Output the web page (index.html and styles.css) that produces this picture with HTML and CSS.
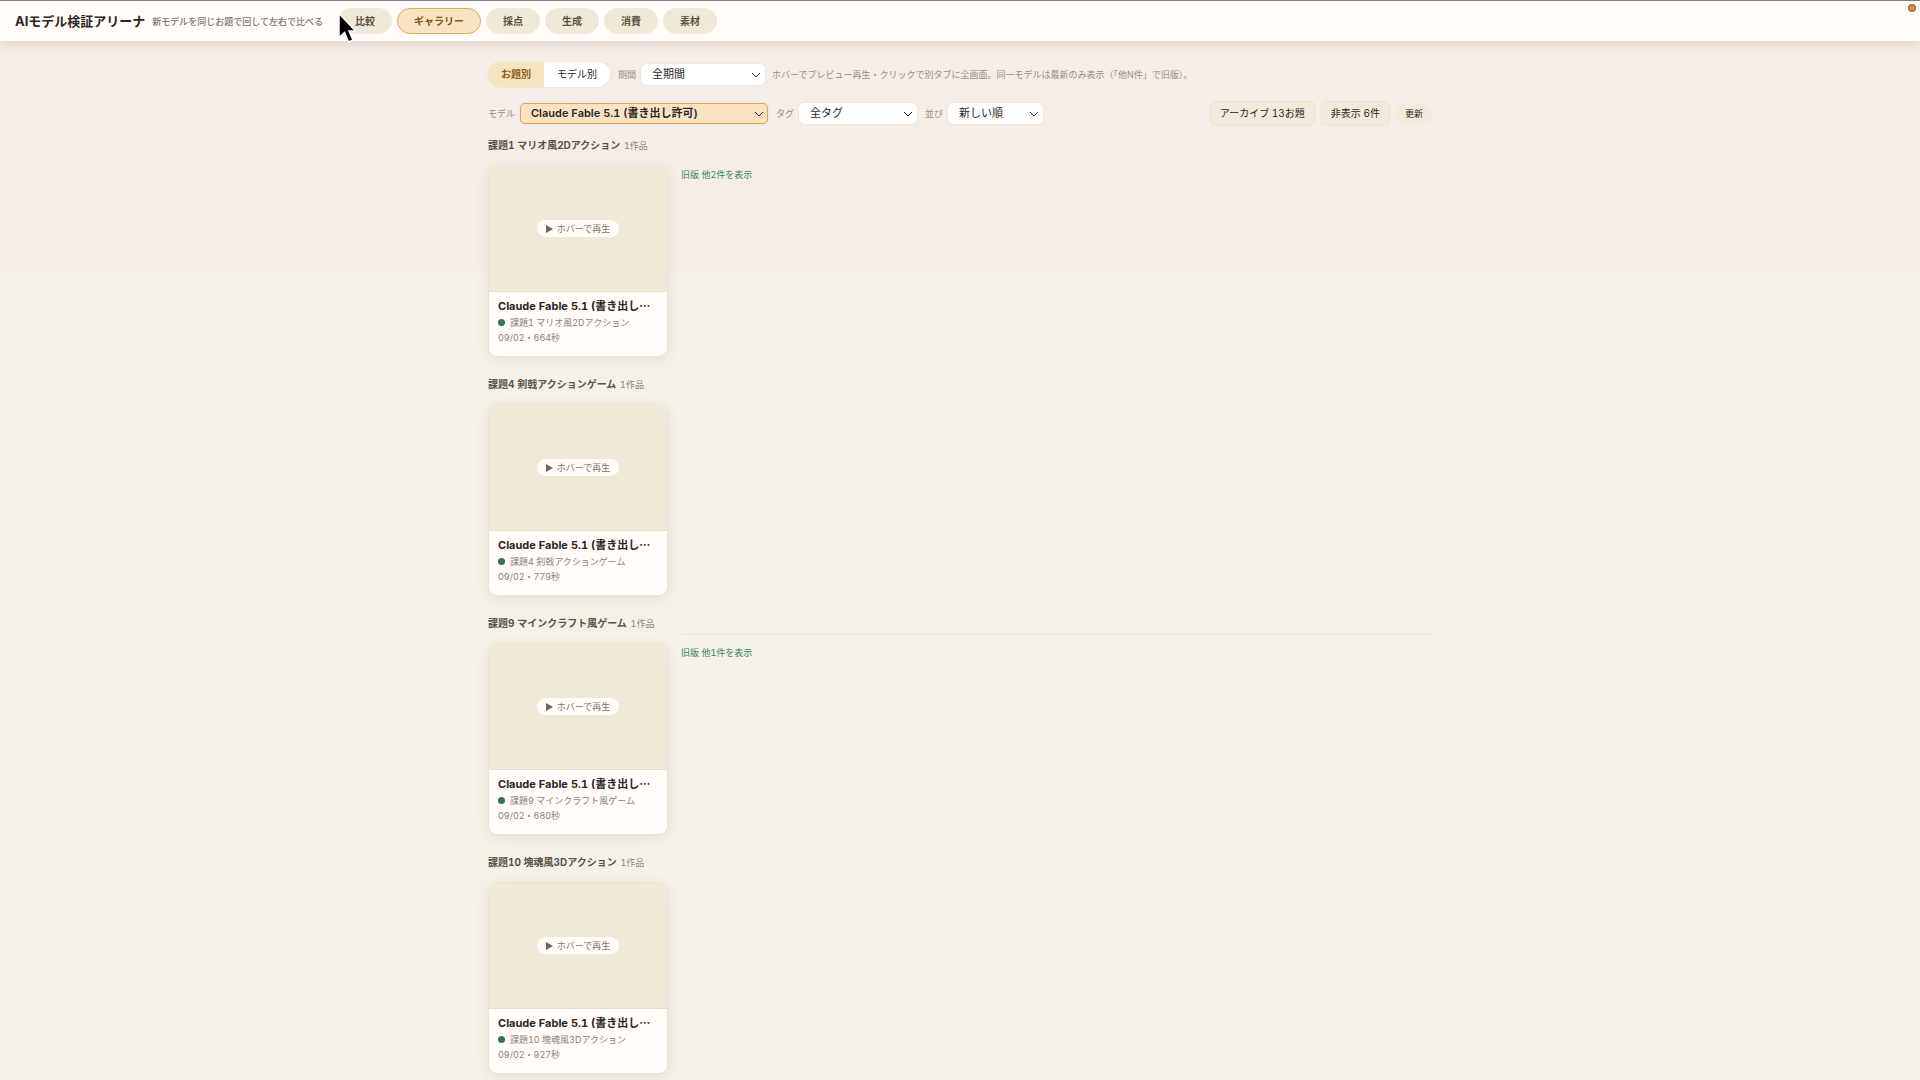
FILE: index.html
```html
<!DOCTYPE html>
<html lang="ja">
<head>
    <meta charset="UTF-8">
    <title>AIモデル検証アリーナ</title>
    <link rel="stylesheet" href="styles.css">
</head>
<body>
    <header class="topbar">
        <h1>AIモデル検証アリーナ</h1>
        <span class="tagline">新モデルを同じお題で回して左右で比べる</span>
        <nav class="nav">
            <button type="button">比較</button>
            <button type="button" class="active">ギャラリー</button>
            <button type="button">採点</button>
            <button type="button">生成</button>
            <button type="button">消費</button>
            <button type="button">素材</button>
        </nav>
        <span class="rec-dot"></span>
        <svg class="cursor" viewBox="0 0 18 32" width="18" height="32">
            <path d="M1 1.500V25.500L6.500 20.500L10.500 30L15 28L11 19H17.500Z" fill="#000" stroke="#fff" stroke-width="1.500"/>
        </svg>
    </header>

    <main class="gallery">
        <div class="toolbar toolbar-top">
            <div class="segment">
                <button type="button" class="active">お題別</button>
                <button type="button">モデル別</button>
            </div>
            <label for="period">期間</label>
            <span class="select w-period">
                <select id="period"><option>全期間</option></select>
                <svg viewBox="0 0 10 6"><path d="M1 1L5 5L9 1"/></svg>
            </span>
            <span class="hint">ホバーでプレビュー再生・クリックで別タブに全画面。同一モデルは最新のみ表示（「他N件」で旧版）。</span>
        </div>
        <div class="toolbar">
            <label for="model">モデル</label>
            <span class="select w-model">
                <select id="model" class="selected"><option>Claude Fable 5.1 (書き出し許可)</option></select>
                <svg viewBox="0 0 10 6"><path d="M1 1L5 5L9 1"/></svg>
            </span>
            <label for="tag">タグ</label>
            <span class="select w-tag">
                <select id="tag"><option>全タグ</option></select>
                <svg viewBox="0 0 10 6"><path d="M1 1L5 5L9 1"/></svg>
            </span>
            <label for="sort">並び</label>
            <span class="select w-sort">
                <select id="sort"><option>新しい順</option></select>
                <svg viewBox="0 0 10 6"><path d="M1 1L5 5L9 1"/></svg>
            </span>
            <div class="actions">
                <button type="button">アーカイブ 13お題</button>
                <button type="button">非表示 6件</button>
                <button type="button" class="refresh">更新</button>
            </div>
        </div>

        <section class="group">
            <h2>課題1 マリオ風2Dアクション <small>1作品</small></h2>
            <article class="card">
                <div class="thumb"><span class="play"><i></i>ホバーで再生</span></div>
                <div class="info">
                    <h3>Claude Fable 5.1 (書き出し⋯</h3>
                    <p class="task">課題1 マリオ風2Dアクション</p>
                    <p>09/02・664秒</p>
                </div>
            </article>
            <div class="older"><a href="#">旧版 他2件を表示</a></div>
        </section>

        <section class="group">
            <h2>課題4 剣戟アクションゲーム <small>1作品</small></h2>
            <article class="card">
                <div class="thumb"><span class="play"><i></i>ホバーで再生</span></div>
                <div class="info">
                    <h3>Claude Fable 5.1 (書き出し⋯</h3>
                    <p class="task">課題4 剣戟アクションゲーム</p>
                    <p>09/02・779秒</p>
                </div>
            </article>
        </section>

        <section class="group">
            <h2>課題9 マインクラフト風ゲーム <small>1作品</small></h2>
            <article class="card">
                <div class="thumb"><span class="play"><i></i>ホバーで再生</span></div>
                <div class="info">
                    <h3>Claude Fable 5.1 (書き出し⋯</h3>
                    <p class="task">課題9 マインクラフト風ゲーム</p>
                    <p>09/02・680秒</p>
                </div>
            </article>
            <div class="older ruled"><a href="#">旧版 他1件を表示</a></div>
        </section>

        <section class="group">
            <h2>課題10 塊魂風3Dアクション <small>1作品</small></h2>
            <article class="card">
                <div class="thumb"><span class="play"><i></i>ホバーで再生</span></div>
                <div class="info">
                    <h3>Claude Fable 5.1 (書き出し⋯</h3>
                    <p class="task">課題10 塊魂風3Dアクション</p>
                    <p>09/02・927秒</p>
                </div>
            </article>
        </section>
    </main>
</body>
</html>
```

FILE: styles.css
```css
* {
    box-sizing: border-box;
}

body {
    margin: 0;
    background: #f4f1e9 linear-gradient(#f5ede7 264px, #f4f1e9 280px) no-repeat;
    color: #2a2622;
    font-family: Inter, "Noto Sans CJK JP", sans-serif;
    font-size: 10px;
    font-variant-numeric: tabular-nums;
    line-height: 15px;
}

button, select {
    font: inherit;
    font-variant-numeric: tabular-nums;
    color: inherit;
    margin: 0;
}

h1, h2, h3, p {
    margin: 0;
}

/* header */
.topbar {
    position: relative;
    display: flex;
    align-items: center;
    height: 41px;
    padding: 0 15px;
    border-top: 1px solid #888080;
    background: #fffcf9;
    box-shadow: 0 2px 12px rgba(90, 70, 40, 0.16);
}

.topbar h1 {
    font-size: 13px;
    line-height: 20px;
}

.tagline {
    margin-left: 7px;
    color: #7d766c;
    font-size: 9px;
    font-weight: 500;
}

.nav {
    display: flex;
    gap: 5px;
    margin-left: 15px;
}

.nav button {
    height: 26px;
    padding: 0 16px;
    border: 1px solid #efe9da;
    border-radius: 13px;
    background: #efe9da;
    color: #5c5140;
    font-weight: 700;
}

.nav .active {
    border-color: #d9ad6c;
    background: #fae3c3;
    color: #80581c;
}

.rec-dot {
    position: absolute;
    top: 3px;
    right: 4px;
    width: 8px;
    height: 8px;
    border: 1px solid #6b5138;
    border-radius: 50%;
    background: #f08c14;
}

.cursor {
    position: absolute;
    top: 11px;
    left: 338px;
}

/* filters */
.gallery {
    max-width: 944px;
    margin: 0 auto;
    padding-top: 20px;
}

.toolbar {
    display: flex;
    align-items: center;
    gap: 5px;
    height: 26px;
}

.toolbar-top {
    margin-bottom: 13px;
}

.toolbar label, .hint {
    color: #988f84;
    font-size: 9px;
}

.toolbar * + label {
    margin-left: 3px;
}

.hint {
    margin-left: 2px;
}

.segment {
    display: flex;
    overflow: hidden;
    border-radius: 13px;
    box-shadow: 0 0 2px rgba(120, 90, 40, 0.12);
}

.segment button {
    height: 25px;
    padding: 0 13px;
    border: none;
    background: #fff;
}

.segment .active {
    background: #f6e3c0;
    color: #8a5b1a;
    font-weight: 700;
}

.select {
    position: relative;
}

.select select {
    display: block;
    width: 100%;
    height: 21px;
    padding: 0 10px;
    border: 1px solid #fff;
    border-radius: 5px;
    appearance: none;
    background: #fff;
    box-shadow: 0 0 2px rgba(120, 90, 40, 0.12);
    font-size: 11px;
}

.select .selected {
    border-color: #e0a54e;
    background: #fae3c3;
    font-weight: 600;
}

.select svg {
    position: absolute;
    top: 8px;
    right: 4px;
    width: 10px;
    height: 6px;
    fill: none;
    stroke: #2a2622;
    pointer-events: none;
}

.w-period {
    width: 124px;
}

.w-model {
    width: 248px;
}

.w-tag {
    width: 118px;
}

.w-sort {
    width: 95px;
}

.actions {
    display: flex;
    align-items: center;
    gap: 6px;
    margin-left: auto;
}

.actions button {
    height: 25px;
    padding: 0 9px;
    border: 1px solid #ebe3d2;
    border-radius: 5px;
    background: #f1eadd;
}

.actions .refresh {
    height: 21px;
    padding: 0 8px;
    border-color: #f1eadd;
    border-radius: 11px;
    font-size: 9px;
}

/* works */
.group {
    display: grid;
    grid-template-columns: 180px 1fr;
    column-gap: 13px;
    margin-bottom: 19px;
}

.toolbar + .group {
    margin-top: 11px;
}

.group h2 {
    grid-column: 1 / 3;
    margin-bottom: 11px;
    color: #5a534a;
    font-size: 10px;
    line-height: 16px;
}

.group small {
    margin-left: 1px;
    color: #8f877c;
    font-size: 9px;
    font-weight: 400;
}

.card {
    height: 192px;
    overflow: hidden;
    border: 1px solid #ebe4d4;
    border-radius: 9px;
    background: #fffcf9;
    box-shadow: 0 3px 14px rgba(120, 90, 60, 0.1);
}

.thumb {
    display: flex;
    align-items: center;
    justify-content: center;
    height: 126px;
    border-bottom: 1px solid #e6dfcd;
    background: #efe9da;
}

.play {
    display: flex;
    align-items: center;
    gap: 4px;
    padding: 1px 9px;
    border-radius: 9px;
    background: #fffcf9;
    color: #7d766c;
    font-size: 9px;
}

.play i {
    border: 4px solid transparent;
    border-right-width: 0;
    border-left: 7px solid #6d665d;
}

.info {
    padding: 6px 9px;
    color: #8a8278;
    font-size: 9px;
}

.info h3 {
    color: #2a2622;
    font-size: 11px;
    line-height: 17px;
    white-space: nowrap;
}

.task::before {
    content: "";
    display: inline-block;
    width: 7px;
    height: 7px;
    margin-right: 5px;
    border-radius: 50%;
    background: #3c6e5e;
}

.older {
    padding-top: 2px;
    font-size: 9px;
}

.older a {
    color: #3c8068;
    text-decoration: none;
}

.ruled {
    margin-top: -9px;
    padding-top: 10px;
    border-top: 1px solid #e9e4db;
}
```
